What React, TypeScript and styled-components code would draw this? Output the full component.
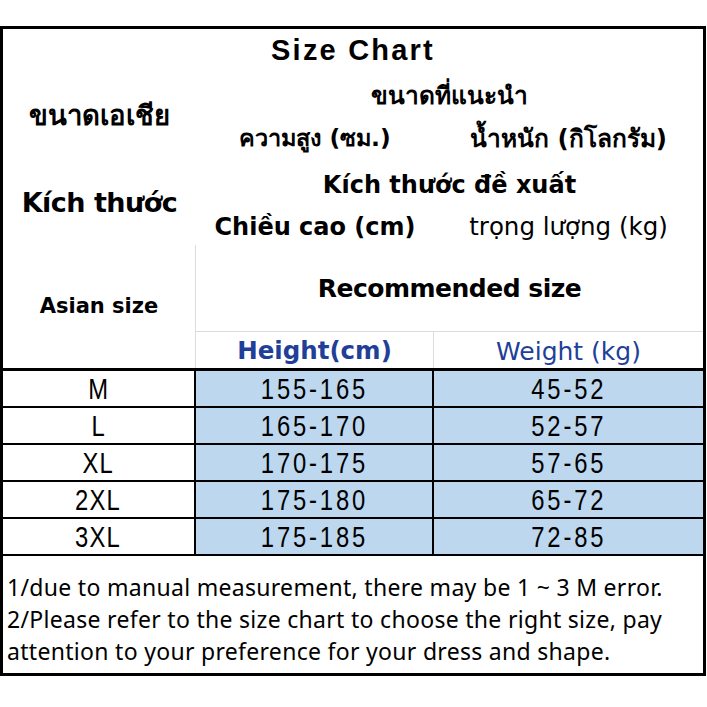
import { Fragment } from 'react';
import styled, { createGlobalStyle } from 'styled-components';

const GlobalStyle = createGlobalStyle`
  html, body {
    margin: 0;
    padding: 0;
    background: #fff;
  }
  * {
    box-sizing: border-box;
  }
`;

const SANS = `"Liberation Sans", Arial, sans-serif`;
const TAHOMA = `"DejaVu Sans", "Liberation Sans", sans-serif`;
const NOTE = `"Noto Sans", "Open Sans", sans-serif`;

const Page = styled.div`
  padding-top: 26px;
  width: 707px;
`;

const Chart = styled.div`
  width: 706px;
  border: 3px solid #000;
  color: #000;
`;

const Header = styled.div`
  display: grid;
  grid-template-columns: 193px 238px 1fr;
  grid-template-rows: 43px 46px 42px 49px 36px 87px 36px;
  border-bottom: 3px solid #000;
`;

const Cell = styled.div<{ $col: string; $row: string; $right?: boolean; $bottom?: boolean; $drop?: number }>`
  grid-column: ${(p) => p.$col};
  grid-row: ${(p) => p.$row};
  display: flex;
  align-items: center;
  justify-content: center;
  white-space: nowrap;
  padding-top: ${(p) => p.$drop ?? 0}px;
  border-right: ${(p) => (p.$right ? '1px solid #dcdcdc' : 'none')};
  border-bottom: ${(p) => (p.$bottom ? '1px solid #dcdcdc' : 'none')};
`;

const Label = styled.span<{ $size: number; $bold?: boolean; $blue?: boolean; $track?: number; $font?: string }>`
  font-family: ${(p) => p.$font ?? TAHOMA};
  font-size: ${(p) => p.$size}px;
  font-weight: ${(p) => (p.$bold ? 700 : 400)};
  letter-spacing: ${(p) => p.$track ?? 0}px;
  color: ${(p) => (p.$blue ? '#1f3f98' : '#000')};
  line-height: 1;
`;

const Rows = styled.div`
  display: grid;
  grid-template-columns: 193px 238px 1fr;
  grid-auto-rows: 37px;
`;

const DataCell = styled.div<{ $shaded?: boolean; $last?: boolean }>`
  display: flex;
  align-items: center;
  justify-content: center;
  background: ${(p) => (p.$shaded ? '#bdd7ee' : '#fff')};
  border-bottom: 2px solid #000;
  border-right: ${(p) => (p.$last ? 'none' : '2px solid #000')};
  padding-top: 2px;
`;

const Narrow = styled.span<{ $track?: number }>`
  display: inline-block;
  font-family: ${SANS};
  font-size: 29px;
  letter-spacing: ${(p) => p.$track ?? 3.5}px;
  line-height: 1;
  transform: scaleX(0.82);
`;

const Notes = styled.div`
  padding: 15px 2px 6px 4px;
  font-family: ${NOTE};
  font-size: 23px;
  letter-spacing: 0.3px;
  line-height: 32px;
  white-space: nowrap;
`;

const sizes = [
  ['M', '155-165', '45-52'],
  ['L', '165-170', '52-57'],
  ['XL', '170-175', '57-65'],
  ['2XL', '175-180', '65-72'],
  ['3XL', '175-185', '72-85'],
];

export default function App() {
  return (
    <Page>
      <GlobalStyle />
      <Chart>
        <Header>
          <Cell $col="1 / 4" $row="1">
            <Label $size={29} $bold $track={2.2} $font={SANS}>Size Chart</Label>
          </Cell>
          <Cell $col="1" $row="2 / 4">
            <Label $size={27.5} $bold>ขนาดเอเชีย</Label>
          </Cell>
          <Cell $col="2 / 4" $row="2" $drop={2}>
            <Label $size={24.5} $bold>ขนาดที่แนะนำ</Label>
          </Cell>
          <Cell $col="2" $row="3">
            <Label $size={23.5} $bold>ความสูง (ซม.)</Label>
          </Cell>
          <Cell $col="3" $row="3">
            <Label $size={24.5} $bold>น้ำหนัก (กิโลกรัม)</Label>
          </Cell>
          <Cell $col="1" $row="4 / 6">
            <Label $size={27} $bold $track={-0.5}>Kích thước</Label>
          </Cell>
          <Cell $col="2 / 4" $row="4">
            <Label $size={24} $bold>Kích thước đề xuất</Label>
          </Cell>
          <Cell $col="2" $row="5">
            <Label $size={24} $bold>Chiều cao (cm)</Label>
          </Cell>
          <Cell $col="3" $row="5">
            <Label $size={24.5}>trọng lượng (kg)</Label>
          </Cell>
          <Cell $col="1" $row="6 / 8" $right>
            <Label $size={21} $bold>Asian size</Label>
          </Cell>
          <Cell $col="2 / 4" $row="6" $bottom>
            <Label $size={25} $bold $track={-0.5}>Recommended size</Label>
          </Cell>
          <Cell $col="2" $row="7" $right $drop={3}>
            <Label $size={24.5} $bold $blue>Height(cm)</Label>
          </Cell>
          <Cell $col="3" $row="7" $drop={3}>
            <Label $size={25} $blue>Weight (kg)</Label>
          </Cell>
        </Header>
        <Rows>
          {sizes.map(([size, height, weight]) => (
            <Fragment key={size}>
              <DataCell>
                <Narrow $track={1.5}>{size}</Narrow>
              </DataCell>
              <DataCell $shaded>
                <Narrow>{height}</Narrow>
              </DataCell>
              <DataCell $shaded $last>
                <Narrow>{weight}</Narrow>
              </DataCell>
            </Fragment>
          ))}
        </Rows>
        <Notes>
          1/due to manual measurement, there may be 1 ~ 3 M error.
          <br />
          2/Please refer to the size chart to choose the right size, pay
          <br />
          attention to your preference for your dress and shape.
        </Notes>
      </Chart>
    </Page>
  );
}
